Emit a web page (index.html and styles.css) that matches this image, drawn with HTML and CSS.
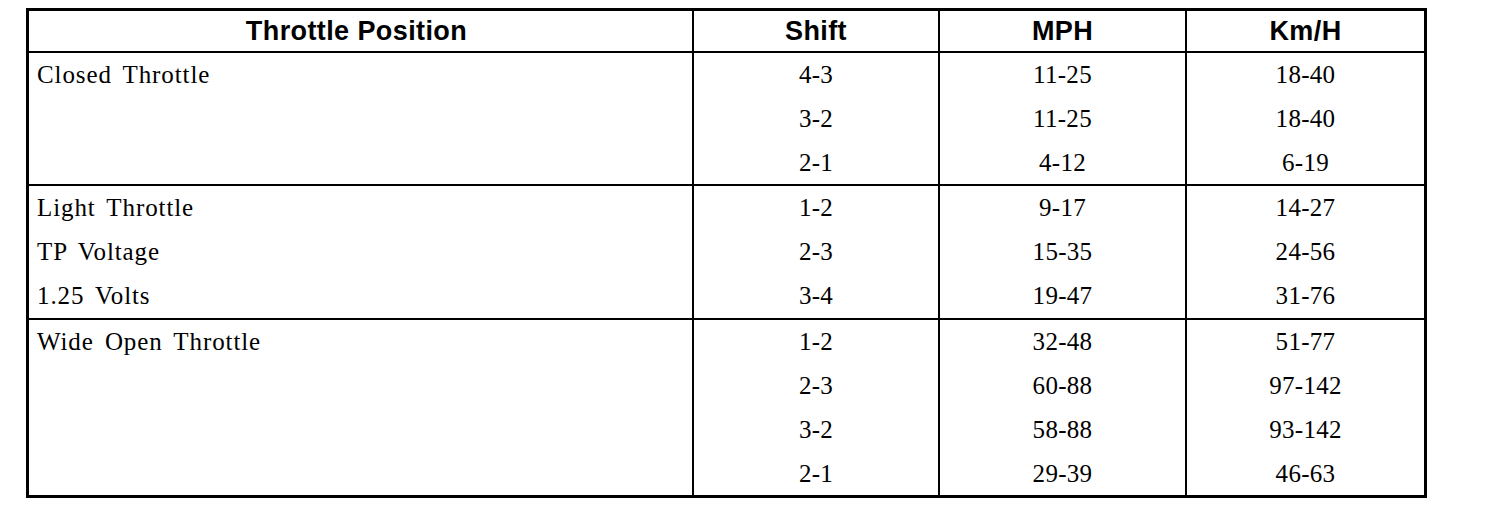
FILE: index.html
```html
<!DOCTYPE html>
<html>
<head>
<meta charset="utf-8">
<link rel="stylesheet" href="styles.css">
</head>
<body>
<div class="page">
<table class="shift-table">
  <colgroup>
    <col class="c1"><col class="c2"><col class="c3"><col class="c4">
  </colgroup>
  <thead>
    <tr><th class="first">Throttle Position</th><th>Shift</th><th>MPH</th><th>Km/H</th></tr>
  </thead>
  <tbody>
    <tr><td class="first">Closed Throttle</td><td>4-3</td><td>11-25</td><td>18-40</td></tr>
    <tr><td class="first"></td><td>3-2</td><td>11-25</td><td>18-40</td></tr>
    <tr class="short"><td class="first"></td><td>2-1</td><td>4-12</td><td>6-19</td></tr>
  </tbody>
  <tbody>
    <tr><td class="first">Light Throttle</td><td>1-2</td><td>9-17</td><td>14-27</td></tr>
    <tr><td class="first">TP Voltage</td><td>2-3</td><td>15-35</td><td>24-56</td></tr>
    <tr><td class="first">1.25 Volts</td><td>3-4</td><td>19-47</td><td>31-76</td></tr>
  </tbody>
  <tbody>
    <tr><td class="first">Wide Open Throttle</td><td>1-2</td><td>32-48</td><td>51-77</td></tr>
    <tr><td class="first"></td><td>2-3</td><td>60-88</td><td>97-142</td></tr>
    <tr><td class="first"></td><td>3-2</td><td>58-88</td><td>93-142</td></tr>
    <tr class="short"><td class="first"></td><td>2-1</td><td>29-39</td><td>46-63</td></tr>
  </tbody>
</table>
</div>
</body>
</html>
```
FILE: styles.css
```css
html, body {
  margin: 0;
  padding: 0;
  background: #fff;
}
.page {
  padding: 8px 0 0 26px;
}
.shift-table {
  border-collapse: separate;
  border-spacing: 0;
  border: 3px solid #000;
  table-layout: fixed;
  width: 1401px;
  color: #000;
}
.shift-table col.c1 { width: 663px; }
.shift-table col.c2 { width: 246px; }
.shift-table col.c3 { width: 247px; }
.shift-table col.c4 { width: 239px; }
.shift-table th,
.shift-table td {
  box-sizing: border-box;
  padding: 0;
  text-align: center;
  vertical-align: middle;
  border-left: 2px solid #000;
}
.shift-table th.first,
.shift-table td.first {
  border-left: none;
}
.shift-table th {
  height: 42px;
  font-family: "Liberation Sans", Arial, sans-serif;
  font-weight: bold;
  font-size: 27px;
  letter-spacing: 0.4px;
  border-bottom: 2px solid #000;
}
.shift-table th.first {
  padding-right: 8px;
}
.shift-table td {
  height: 44px;
  font-family: "Liberation Serif", "Times New Roman", serif;
  font-size: 25px;
  letter-spacing: 0.3px;
}
.shift-table tr.short td {
  height: 43px;
}
.shift-table td.first {
  text-align: left;
  padding-left: 8px;
  letter-spacing: 0.9px;
  word-spacing: 4px;
}
.shift-table tbody + tbody tr:first-child td {
  border-top: 2px solid #000;
  height: 46px;
}
```
